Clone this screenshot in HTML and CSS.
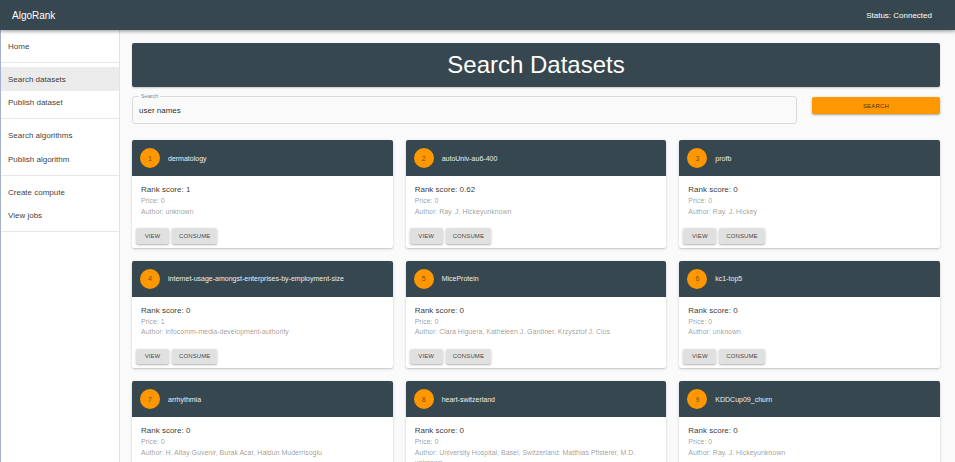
FILE: index.html
```html
<!DOCTYPE html>
<html lang="en">
<head>
<meta charset="utf-8">
<title>AlgoRank</title>
<link rel="stylesheet" href="styles.css">
</head>
<body>
<header class="appbar">
  <div class="brand">AlgoRank</div>
  <div class="status">Status: Connected</div>
</header>
<div class="layout">
  <nav class="sidebar">
    <ul class="navlist">
      <li class="navitem">Home</li>
    </ul>
    <ul class="navlist">
      <li class="navitem selected">Search datasets</li>
      <li class="navitem">Publish dataset</li>
    </ul>
    <ul class="navlist">
      <li class="navitem">Search algorithms</li>
      <li class="navitem">Publish algorithm</li>
    </ul>
    <ul class="navlist">
      <li class="navitem">Create compute</li>
      <li class="navitem">View jobs</li>
    </ul>
  </nav>
  <main class="main">
    <div class="titlebar"><h1 class="title">Search Datasets</h1></div>
    <div class="searchrow">
      <div class="field">
        <span class="field-label">Search</span>
        <input class="field-input" type="text" value="user names">
      </div>
      <button class="btn-search">SEARCH</button>
    </div>
    <div class="grid">
      <div class="card">
        <div class="card-head"><span class="avatar">1</span><span class="card-title">dermatology</span></div>
        <div class="card-body"><div class="rank">Rank score: 1</div><div class="meta">Price: 0</div><div class="meta">Author: unknown</div></div>
        <div class="card-actions"><button class="btn">VIEW</button><button class="btn">CONSUME</button></div>
      </div>
      <div class="card">
        <div class="card-head"><span class="avatar">2</span><span class="card-title">autoUniv-au6-400</span></div>
        <div class="card-body"><div class="rank">Rank score: 0.62</div><div class="meta">Price: 0</div><div class="meta">Author: Ray. J. Hickeyunknown</div></div>
        <div class="card-actions"><button class="btn">VIEW</button><button class="btn">CONSUME</button></div>
      </div>
      <div class="card">
        <div class="card-head"><span class="avatar">3</span><span class="card-title">profb</span></div>
        <div class="card-body"><div class="rank">Rank score: 0</div><div class="meta">Price: 0</div><div class="meta">Author: Ray. J. Hickey</div></div>
        <div class="card-actions"><button class="btn">VIEW</button><button class="btn">CONSUME</button></div>
      </div>
      <div class="card">
        <div class="card-head"><span class="avatar">4</span><span class="card-title">internet-usage-amongst-enterprises-by-employment-size</span></div>
        <div class="card-body"><div class="rank">Rank score: 0</div><div class="meta">Price: 1</div><div class="meta">Author: infocomm-media-development-authority</div></div>
        <div class="card-actions"><button class="btn">VIEW</button><button class="btn">CONSUME</button></div>
      </div>
      <div class="card">
        <div class="card-head"><span class="avatar">5</span><span class="card-title">MiceProtein</span></div>
        <div class="card-body"><div class="rank">Rank score: 0</div><div class="meta">Price: 0</div><div class="meta">Author: Clara Higuera, Katheleen J. Gardiner, Krzysztof J. Cios</div></div>
        <div class="card-actions"><button class="btn">VIEW</button><button class="btn">CONSUME</button></div>
      </div>
      <div class="card">
        <div class="card-head"><span class="avatar">6</span><span class="card-title">kc1-top5</span></div>
        <div class="card-body"><div class="rank">Rank score: 0</div><div class="meta">Price: 0</div><div class="meta">Author: unknown</div></div>
        <div class="card-actions"><button class="btn">VIEW</button><button class="btn">CONSUME</button></div>
      </div>
      <div class="card">
        <div class="card-head"><span class="avatar">7</span><span class="card-title">arrhythmia</span></div>
        <div class="card-body"><div class="rank">Rank score: 0</div><div class="meta">Price: 0</div><div class="meta">Author: H. Altay Guvenir, Burak Acar, Haldun Muderrisoglu</div></div>
        <div class="card-actions"><button class="btn">VIEW</button><button class="btn">CONSUME</button></div>
      </div>
      <div class="card">
        <div class="card-head"><span class="avatar">8</span><span class="card-title">heart-switzerland</span></div>
        <div class="card-body"><div class="rank">Rank score: 0</div><div class="meta">Price: 0</div><div class="meta">Author: University Hospital, Basel, Switzerland: Matthias Pfisterer, M.D. unknown</div></div>
        <div class="card-actions"><button class="btn">VIEW</button><button class="btn">CONSUME</button></div>
      </div>
      <div class="card">
        <div class="card-head"><span class="avatar">9</span><span class="card-title">KDDCup09_churn</span></div>
        <div class="card-body"><div class="rank">Rank score: 0</div><div class="meta">Price: 0</div><div class="meta">Author: Ray. J. Hickeyunknown</div></div>
        <div class="card-actions"><button class="btn">VIEW</button><button class="btn">CONSUME</button></div>
      </div>
    </div>
  </main>
</div>
</body>
</html>
```

FILE: styles.css
```css
* { box-sizing: border-box; }
html, body { margin: 0; padding: 0; }
body {
  font-family: "Liberation Sans", Arial, Helvetica, sans-serif;
  background: #fafafa;
  color: rgba(0,0,0,0.87);
}
.appbar {
  position: relative;
  z-index: 2;
  height: 30px;
  background: #37474f;
  color: #fff;
  display: flex;
  align-items: center;
  justify-content: space-between;
  padding: 0 23px 0 12px;
  box-shadow: 0 1px 5px rgba(0,0,0,0.25), 0 2px 2px rgba(0,0,0,0.14);
}
.brand { font-size: 10px; }
.status { font-size: 8px; }
.layout {
  display: flex;
  align-items: stretch;
  min-height: 432px;
}
.sidebar {
  width: 120px;
  flex: none;
  background: #fff;
  border-left: 1px solid #a3b1d1;
  border-right: 1px solid #e2e2e2;
}
.navlist {
  list-style: none;
  margin: 0;
  padding: 4px 0;
  border-bottom: 1px solid #e6e6e6;
}
.navitem {
  height: 23.75px;
  display: flex;
  align-items: center;
  padding-left: 7px;
  padding-top: 1px;
  font-size: 8px;
  color: rgba(0,0,0,0.8);
}
.navitem.selected { background: #ebebeb; }
.main {
  flex: 1;
  min-width: 0;
  padding: 13px 15px 20px 12px;
}
.titlebar {
  height: 44px;
  background: #37474f;
  border-radius: 2px;
  display: flex;
  align-items: center;
  justify-content: center;
  box-shadow: 0 1px 2px rgba(0,0,0,0.2);
}
.title {
  margin: 0;
  font-weight: 400;
  font-size: 24px;
  color: #fff;
}
.searchrow {
  margin-top: 9px;
  display: flex;
  align-items: flex-start;
  gap: 15px;
}
.field {
  position: relative;
  flex: 1;
  height: 28px;
  border: 1px solid #dadada;
  border-radius: 3px;
  display: flex;
  align-items: center;
}
.field-label {
  position: absolute;
  left: 6px;
  top: -4px;
  padding: 0 2px;
  font-size: 5.5px;
  line-height: 7px;
  color: rgba(0,0,0,0.54);
  background: #fafafa;
}
.field-input {
  border: 0;
  outline: 0;
  background: transparent;
  font: inherit;
  font-size: 8px;
  color: rgba(0,0,0,0.87);
  padding: 0 0 0 6px;
  width: 100%;
  margin-top: 1px;
}
.btn-search {
  width: 128px;
  height: 17px;
  margin-top: 1px;
  border: 0;
  border-radius: 2px;
  background: #ff9800;
  font-family: inherit;
  font-size: 6px;
  letter-spacing: 0.2px;
  color: rgba(0,0,0,0.75);
  box-shadow: 0 1px 3px rgba(0,0,0,0.25), 0 1px 1px rgba(0,0,0,0.12);
  padding: 0;
}
.grid {
  margin-top: 16px;
  display: grid;
  grid-template-columns: repeat(3, 1fr);
  column-gap: 13px;
  row-gap: 13px;
  align-items: start;
}
.card {
  background: #fff;
  border-radius: 2px;
  overflow: hidden;
  box-shadow: 0 1px 3px rgba(0,0,0,0.16), 0 1px 1px rgba(0,0,0,0.08);
}
.card-head {
  height: 36px;
  background: #37474f;
  display: flex;
  align-items: center;
  padding: 0 8px;
  gap: 8px;
}
.avatar {
  width: 20px;
  height: 20px;
  flex: none;
  border-radius: 50%;
  background: #ff9800;
  color: #7a4f12;
  font-size: 7px;
  display: flex;
  align-items: center;
  justify-content: center;
}
.card-title {
  font-size: 7px;
  color: #eceff1;
  white-space: nowrap;
}
.card-body {
  padding: 8px 9px 8px;
}
.rank {
  font-size: 8px;
  line-height: 12px;
  color: rgba(0,0,0,0.82);
}
.meta {
  font-size: 7px;
  line-height: 10.5px;
  color: rgba(0,0,0,0.42);
}
.card-actions {
  display: flex;
  gap: 3px;
  padding: 3px 4px 4px;
}
.btn {
  height: 15.5px;
  min-width: 33px;
  padding: 0 7px;
  border: 0;
  border-radius: 2px;
  background: #e0e0e0;
  font-family: inherit;
  font-size: 6px;
  letter-spacing: 0.1px;
  color: rgba(0,0,0,0.75);
  box-shadow: 0 1px 3px rgba(0,0,0,0.2), 0 1px 1px rgba(0,0,0,0.12);
}
```
